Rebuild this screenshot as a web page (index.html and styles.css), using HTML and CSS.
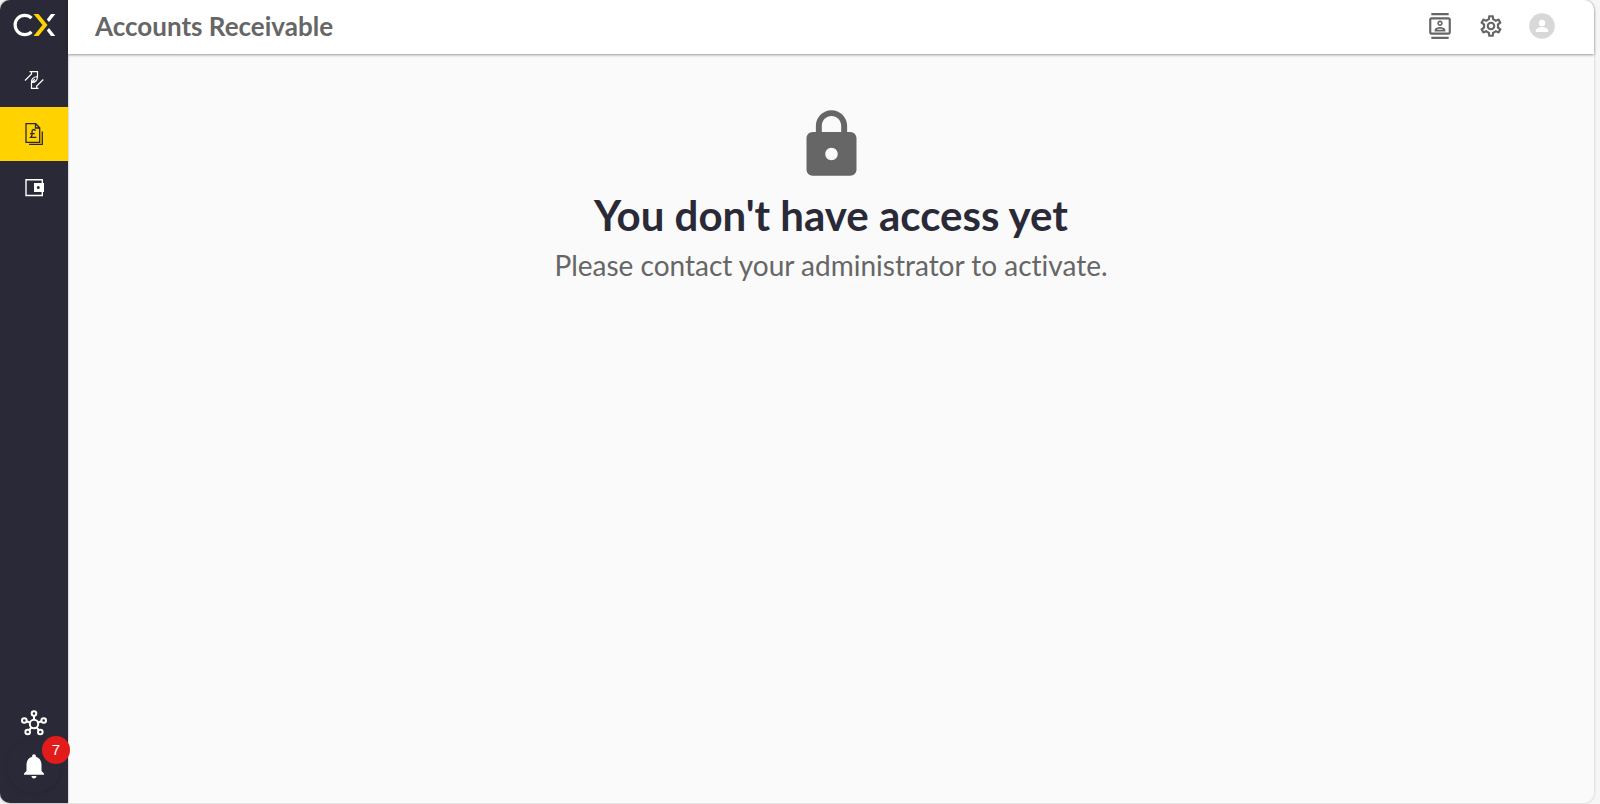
FILE: index.html
```html
<!DOCTYPE html>
<html lang="en">
  <head>
    <meta charset="UTF-8" />
    <meta name="viewport" content="width=device-width, initial-scale=1.0" />
    <title>Accounts Receivable</title>
    <link rel="stylesheet" href="styles.css">
  </head>
  <body>
    <div class="app">
      <aside class="sidebar">
        <a class="logo" href="#" aria-label="CX home">
          <svg width="44" height="24" viewBox="0 0 44 24" fill="none" stroke-width="3.200">
            <path stroke="#fff" d="M19.500 5.200A9.600 9.600 0 1 0 19.500 18.800" />
            <path fill="#ffd200" d="M21.500 1h5L35.500 12l-9 11h-5l9-11z" />
            <path fill="#fff" d="M39 1h4.300l-6.300 8-2.200-2.600zM37 15l6.300 8H39l-4.200-5.400z" />
          </svg>
        </a>

        <nav class="nav">
          <a class="nav-item" href="#" aria-label="Payments">
            <svg width="20" height="20" viewBox="0 0 20 20" fill="none" stroke="#fff" stroke-width="1.200">
              <path d="M1 10.500L7.500 4V1.600M5.500 1.600h8v6M19.300 9.500L12.700 16v2.400M14.500 18.400h-7v-6" />
              <path d="M7.500 12.400c-.6-2.400 1.600-5.600 5.800-5.900.4 3-1.800 6.400-5.800 5.900zM7.500 12.400l3.300-3.200" />
            </svg>
          </a>
          <a class="nav-item active" href="#" aria-label="Accounts Receivable">
            <svg width="20" height="24" viewBox="0 0 20 24" fill="none" stroke="#2a2937" stroke-width="1.300">
              <path d="M2 1.700h9.700l4 4v14.600H2zM11.500 2v4h4" />
              <path d="M18.300 9.500v12.800H5" />
              <path d="M11.500 8.700C10.500 6.800 8 7.300 8 9.500c0 2 1 3.900-1.300 5.900h5.600M6 11.700h4.700" />
            </svg>
          </a>
          <a class="nav-item" href="#" aria-label="Wallet">
            <svg width="20" height="20" viewBox="0 0 20 20">
              <path fill="none" stroke="#fff" stroke-width="1.400" d="M18.300 6V1.700H2v15.800h16.300V13" />
              <path fill="#fff" fill-rule="evenodd" d="M10 5h10v9H10zM14.300 8a1.500 1.500 0 1 0 0 3 1.500 1.500 0 0 0 0-3z" />
            </svg>
          </a>
        </nav>

        <div class="sidebar-bottom">
          <a class="hub" href="#" aria-label="Connections">
            <svg width="28" height="28" viewBox="0 0 28 28" fill="none" stroke="#fff" stroke-width="2">
              <circle cx="14" cy="15" r="4.200" />
              <circle cx="14" cy="4.500" r="2.300" />
              <circle cx="4.300" cy="11.500" r="2.300" />
              <circle cx="23.700" cy="11.500" r="2.300" />
              <circle cx="7.700" cy="23" r="2.300" />
              <circle cx="20.300" cy="23" r="2.300" />
              <path d="M14 7v4M6.500 12.300l3.500 1.200M21.500 12.300L18 13.500M9.200 21l2.300-2.600M18.800 21l-2.300-2.600" />
            </svg>
          </a>
          <button class="bell" type="button" aria-label="Notifications">
            <svg width="30" height="30" viewBox="0 0 24 24" fill="#fff">
              <path d="M12 22c1.100 0 2-.9 2-2h-4c0 1.100.89 2 2 2zm6-6v-5c0-3.070-1.640-5.640-4.500-6.320V4c0-.83-.67-1.500-1.500-1.500s-1.500.67-1.500 1.500v.68C7.630 5.360 6 7.920 6 11v5l-2 2v1h16v-1l-2-2z" />
            </svg>
            <span class="badge">7</span>
          </button>
        </div>
      </aside>

      <div class="content">
        <header class="topbar">
          <h1>Accounts Receivable</h1>
          <div class="actions">
            <button type="button" aria-label="Contacts">
              <svg width="26" height="26" viewBox="0 0 24 24" fill="#666">
                <path d="M20 4H4c-1.100 0-2 .9-2 2v12c0 1.100.9 2 2 2h16c1.100 0 2-.9 2-2V6c0-1.100-.9-2-2-2zm0 14H4V6h16v12zM4 0h16v2H4zm0 22h16v2H4zm8-10c1.380 0 2.500-1.120 2.500-2.500S13.380 7 12 7 9.500 8.120 9.500 9.500 10.620 12 12 12zm0-3.500c.55 0 1 .45 1 1s-.45 1-1 1-1-.45-1-1 .45-1 1-1zm5 7.490C17 13.900 13.690 13 12 13s-5 .9-5 2.990V17h10v-1.010zm-8.190-.49c.61-.52 2.030-1 3.190-1 1.170 0 2.590.48 3.200 1H8.810z" />
              </svg>
            </button>
            <button type="button" aria-label="Settings">
              <svg width="26" height="26" viewBox="0 0 24 24" fill="#666">
                <path d="M19.430 12.980c.04-.32.07-.64.07-.98 0-.34-.03-.66-.07-.98l2.110-1.650c.19-.15.24-.42.12-.64l-2-3.460c-.09-.16-.26-.25-.44-.25-.06 0-.12.010-.17.030l-2.490 1c-.52-.4-1.080-.73-1.690-.98l-.38-2.650C14.460 2.180 14.250 2 14 2h-4c-.25 0-.46.18-.49.42l-.38 2.650c-.61.25-1.170.59-1.690.98l-2.490-1c-.06-.02-.12-.03-.18-.03-.17 0-.34.09-.43.25l-2 3.460c-.13.22-.07.49.12.64l2.110 1.650c-.04.32-.07.65-.07.98 0 .33.030.66.070.98l-2.110 1.650c-.19.15-.24.42-.12.64l2 3.460c.09.16.26.25.44.25.06 0 .12-.01.17-.03l2.490-1c.52.4 1.080.73 1.690.98l.38 2.650c.03.24.24.42.49.42h4c.25 0 .46-.18.49-.42l.38-2.650c.61-.25 1.170-.59 1.690-.98l2.490 1c.06.02.12.03.18.03.17 0 .34-.09.43-.25l2-3.460c.12-.22.07-.49-.12-.64l-2.110-1.650zm-1.980-1.710c.04.31.05.52.05.73 0 .21-.02.43-.05.73l-.14 1.130.89.7 1.080.84-.7 1.210-1.270-.51-1.040-.42-.9.68c-.43.32-.84.56-1.250.73l-1.060.43-.16 1.130-.2 1.350h-1.400l-.19-1.350-.16-1.130-1.060-.43c-.43-.18-.83-.41-1.230-.71l-.91-.7-1.060.43-1.270.51-.7-1.210 1.080-.84.89-.7-.14-1.130c-.03-.31-.05-.54-.05-.74s.02-.43.05-.73l.14-1.130-.89-.7-1.080-.84.7-1.210 1.270.51 1.040.42.9-.68c.43-.32.84-.56 1.250-.73l1.060-.43.16-1.130.2-1.350h1.390l.19 1.350.16 1.130 1.060.43c.43.18.83.41 1.230.71l.91.7 1.060-.43 1.270-.51.7 1.210-1.070.85-.89.7.14 1.130zM12 8c-2.210 0-4 1.790-4 4s1.790 4 4 4 4-1.790 4-4-1.790-4-4-4zm0 6c-1.100 0-2-.9-2-2s.9-2 2-2 2 .9 2 2-.9 2-2 2z" />
              </svg>
            </button>
            <button type="button" aria-label="Profile">
              <svg width="26" height="26" viewBox="0 0 26 26">
                <circle cx="13" cy="13" r="12.800" fill="#d8d8d8" />
                <circle cx="13" cy="10" r="3.200" fill="#fff" />
                <path fill="#fff" d="M6.800 19v-1.500c0-2.200 4-3.500 6.200-3.500s6.200 1.300 6.200 3.500V19z" />
              </svg>
            </button>
          </div>
        </header>

        <main class="no-access">
          <svg width="75" height="75" viewBox="0 0 24 24" fill="#666">
            <path d="M18 8h-1V6c0-2.760-2.240-5-5-5S7 3.240 7 6v2H6c-1.100 0-2 .9-2 2v10c0 1.100.9 2 2 2h12c1.100 0 2-.9 2-2V10c0-1.100-.9-2-2-2zm-6 9c-1.100 0-2-.9-2-2s.9-2 2-2 2 .9 2 2-.9 2-2 2zm3.100-9H8.900V6c0-1.710 1.390-3.100 3.100-3.100 1.710 0 3.100 1.390 3.100 3.100v2z" />
          </svg>
          <h2>You don't have access yet</h2>
          <p>Please contact your administrator to activate.</p>
        </main>
      </div>
    </div>
  </body>
</html>
```
FILE: styles.css
```css
* {
  box-sizing: border-box;
}
body {
  margin: 0;
  padding: 0 6px 1px 0;
  min-height: 100vh;
  display: flex;
  background: #f6f6f6;
  font-family: Lato, "Liberation Sans", sans-serif;
  font-variant-ligatures: none;
  color: #666;
}
button {
  background: none;
  border: none;
  padding: 0;
  font: inherit;
  cursor: pointer;
}
svg {
  display: block;
}
.app {
  flex: 1;
  display: flex;
  background: #fafafa;
  border-radius: 10px;
  box-shadow: 0 0 3px rgba(0, 0, 0, 0.2);
}

/* sidebar */
.sidebar {
  width: 68px;
  display: flex;
  flex-direction: column;
  background: #2a2937;
  border-radius: 10px 0 0 10px;
  box-shadow: 0 0 2px rgba(0, 0, 0, 0.4);
}
.logo {
  height: 53px;
  padding-top: 13px;
  display: flex;
  justify-content: center;
}
.nav-item {
  height: 54px;
  display: flex;
  align-items: center;
  justify-content: center;
}
.nav-item.active {
  background: #ffd200;
}
.sidebar-bottom {
  margin-top: auto;
  display: flex;
  flex-direction: column;
  align-items: center;
  gap: 2px;
  padding-bottom: 10px;
}
.bell {
  position: relative;
  width: 54px;
  height: 54px;
  display: flex;
  align-items: center;
  justify-content: center;
  border-radius: 50%;
  box-shadow: 0 1px 4px rgba(0, 0, 0, 0.12);
}
.badge {
  position: absolute;
  top: -3px;
  right: -9px;
  width: 28px;
  height: 28px;
  border-radius: 50%;
  background: #e21b1b;
  color: #fff;
  font-family: "Liberation Sans", Arial, sans-serif;
  font-size: 15px;
  line-height: 28px;
  text-align: center;
}

/* main area */
.content {
  flex: 1;
  display: flex;
  flex-direction: column;
}
.topbar {
  height: 54px;
  padding: 0 39px 2px 27px;
  display: flex;
  align-items: center;
  justify-content: space-between;
  background: #fff;
  border-radius: 0 10px 0 0;
  box-shadow: 0 1px 3px rgba(0, 0, 0, 0.4);
}
.topbar h1 {
  margin: 0;
  font-size: 26px;
  line-height: 52px;
  font-weight: 700;
}
.actions {
  display: flex;
  gap: 25px;
}
.no-access {
  display: flex;
  flex-direction: column;
  align-items: center;
  padding-top: 53px;
  text-align: center;
}
.no-access h2 {
  margin: 7px 0 0;
  font-size: 42px;
  line-height: 52px;
  font-weight: 700;
  color: #2a2937;
}
.no-access p {
  margin: 6px 0 0;
  font-size: 28px;
  line-height: 36px;
}
```
